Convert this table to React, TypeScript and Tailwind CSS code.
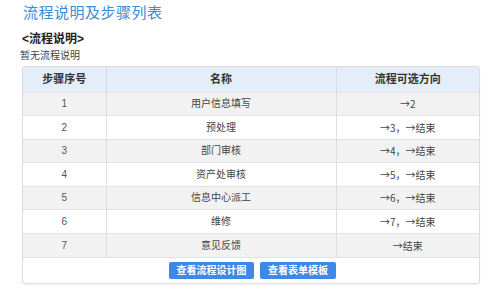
const steps = [
  { no: 1, name: '用户信息填写', next: '→2' },
  { no: 2, name: '预处理', next: '→3，→结束' },
  { no: 3, name: '部门审核', next: '→4，→结束' },
  { no: 4, name: '资产处审核', next: '→5，→结束' },
  { no: 5, name: '信息中心派工', next: '→6，→结束' },
  { no: 6, name: '维修', next: '→7，→结束' },
  { no: 7, name: '意见反馈', next: '→结束' },
];

export default function App() {
  return (
    <div className="w-[504px] h-[302px] bg-white overflow-hidden font-['Liberation_Sans','Noto_Sans_CJK_SC',sans-serif] text-[#333]">
      <div className="pl-[23px] pt-[4px] h-[26px] text-[15px] leading-[18px] text-[#3b8dd3] tracking-[0.5px]">
        流程说明及步骤列表
      </div>
      <div className="pl-[22px] pt-[6px] text-[12px] leading-[14px] font-bold text-[#222]">&lt;流程说明&gt;</div>
      <div className="pl-[20px] pt-[4px] text-[10px] leading-[12px] text-[#444]">暂无流程说明</div>
      <div className="ml-[22px] mt-[4px] w-[458px] border border-[#dcdcdc] rounded-[3px] shadow-[0_1px_2px_rgba(0,0,0,0.06)] overflow-hidden">
        <table className="w-full border-collapse table-fixed text-[10px]">
          <colgroup>
            <col className="w-[83px]" />
            <col className="w-[230px]" />
            <col />
          </colgroup>
          <thead>
            <tr className="h-[25px] bg-[#e3eef8]">
              <th className="font-bold text-[11px] text-[#333] border-r border-[#d6dde3]">步骤序号</th>
              <th className="font-bold text-[11px] text-[#333] border-r border-[#d6dde3]">名称</th>
              <th className="font-bold text-[11px] text-[#333]">流程可选方向</th>
            </tr>
          </thead>
          <tbody>
            {steps.map((s, i) => (
              <tr
                key={s.no}
                className={`h-[23.5px] border-t border-[#e2e2e2] ${i % 2 === 0 ? 'bg-[#f2f2f2]' : 'bg-white'}`}
              >
                <td className="text-center text-[#555] border-r border-[#dedede]">{s.no}</td>
                <td className="text-center text-[#444] border-r border-[#dedede]">{s.name}</td>
                <td className="text-center text-[#444] font-['Noto_Sans_CJK_SC',sans-serif]">{s.next}</td>
              </tr>
            ))}
          </tbody>
        </table>
        <div className="h-[26px] border-t border-[#e2e2e2] flex items-center justify-center gap-[6px] pl-[3px]">
          <button className="h-[17px] w-[85px] rounded-[2px] bg-[#3f88e8] text-white text-[10px] font-bold leading-[17px]">
            查看流程设计图
          </button>
          <button className="h-[17px] w-[76px] rounded-[2px] bg-[#3f88e8] text-white text-[10px] font-bold leading-[17px]">
            查看表单模板
          </button>
        </div>
      </div>
    </div>
  );
}
